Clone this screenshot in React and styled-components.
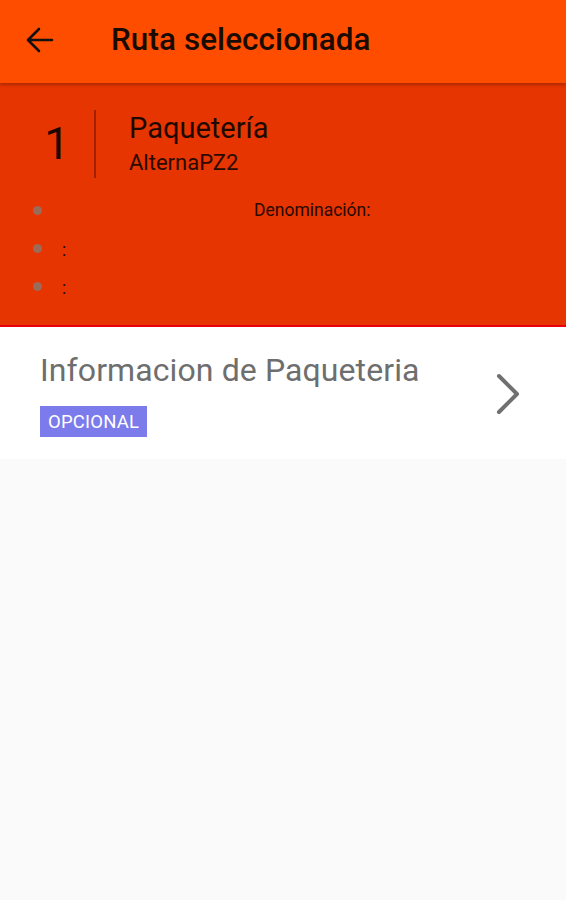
import React from "react";
import styled, { createGlobalStyle } from "styled-components";

const Global = createGlobalStyle`
  html, body { margin: 0; padding: 0; background: #fafafa; }
  body { font-family: Roboto, "Noto Sans", "Liberation Sans", sans-serif; }
`;

const Page = styled.div`
  width: 566px;
  min-height: 900px;
  background: #fafafa;
  display: flex;
  flex-direction: column;
`;

const Toolbar = styled.header`
  height: 83px;
  background: #ff4d00;
  display: flex;
  align-items: center;
  padding-left: 26px;
  box-shadow: 0 2px 3px rgba(0, 0, 0, 0.25);
  position: relative;
  z-index: 1;
  box-sizing: border-box;
`;

const BackButton = styled.div`
  width: 28px;
  height: 28px;
  display: flex;
  align-items: center;
  justify-content: center;
  margin-right: 57px;
  margin-top: -4px;
`;

const Title = styled.h1`
  margin: 0;
  font-size: 31.4px;
  font-weight: 500;
  color: #1a0a00;
  margin-top: -5px;
  letter-spacing: 0.1px;
`;

const RouteCard = styled.section`
  background: #e63500;
  border-bottom: 2px solid #e8000e;
  height: 244px;
  box-sizing: border-box;
  padding: 27px 0 0 0;
  display: flex;
  flex-direction: column;
`;

const RouteHead = styled.div`
  display: flex;
  align-items: stretch;
  height: 68px;
`;

const Number = styled.div`
  width: 96px;
  display: flex;
  justify-content: center;
  align-items: center;
  font-size: 45px;
  font-weight: 400;
  color: #1a0500;
  padding-left: 20px;
  box-sizing: border-box;
  border-right: 2px solid #a02000;
  line-height: 1;
  padding-bottom: 2px;
`;

const RouteInfo = styled.div`
  padding-left: 33px;
  display: flex;
  flex-direction: column;
`;

const RouteName = styled.div`
  font-size: 29px;
  color: #1f0800;
  line-height: 32px;
  margin-top: 2px;
`;

const RouteCode = styled.div`
  font-size: 22px;
  color: #2a0a00;
  line-height: 26px;
  margin-top: 6px;
`;

const Fields = styled.ul`
  list-style: none;
  margin: 22px 0 0 0;
  padding: 0 0 0 33px;
  display: flex;
  flex-direction: column;
  gap: 18px;
`;

const Field = styled.li`
  display: flex;
  align-items: center;
  height: 20px;
  font-size: 17.5px;
  color: #2a0800;
`;

const Dot = styled.span`
  width: 9px;
  height: 9px;
  border-radius: 50%;
  background: #9c6a58;
  flex: none;
`;

const FieldText = styled.span`
  margin-left: ${(p) => p.$offset}px;
  line-height: 20px;
  margin-top: ${(p) => (p.$top ? p.$top : 0)}px;
`;

const InfoRow = styled.div`
  background: #ffffff;
  height: 132px;
  display: flex;
  align-items: center;
  justify-content: space-between;
  padding: 0 42px 0 40px;
  box-sizing: border-box;
`;

const InfoText = styled.div`
  display: flex;
  flex-direction: column;
  align-items: flex-start;
  margin-top: 2px;
`;

const InfoTitle = styled.div`
  font-size: 32px;
  color: #6e6e6e;
  line-height: 38px;
  letter-spacing: 0.1px;
`;

const Chip = styled.span`
  margin-top: 17px;
  background: #7b7beb;
  color: #ffffff;
  font-size: 18.5px;
  line-height: 31px;
  height: 31px;
  padding: 1px 8px 0;
  box-sizing: border-box;
  letter-spacing: 0.2px;
`;

const Chevron = styled.div`
  width: 28px;
  height: 44px;
  display: flex;
  align-items: center;
  justify-content: center;
  margin-top: 2px;
  margin-right: 2px;
`;

export default function App() {
  return (
    <Page>
      <Global />
      <Toolbar>
        <BackButton>
          <svg width="28" height="26" viewBox="0 0 28 26" fill="none">
            <path
              d="M26 13H3M13 2L2 13l11 11"
              stroke="#111"
              strokeWidth="2.6"
              strokeLinecap="round"
              strokeLinejoin="round"
            />
          </svg>
        </BackButton>
        <Title>Ruta seleccionada</Title>
      </Toolbar>
      <RouteCard>
        <RouteHead>
          <Number>1</Number>
          <RouteInfo>
            <RouteName>Paquetería</RouteName>
            <RouteCode>AlternaPZ2</RouteCode>
          </RouteInfo>
        </RouteHead>
        <Fields>
          <Field>
            <Dot />
            <FieldText $offset={212} $top={0}>Denominación:</FieldText>
          </Field>
          <Field>
            <Dot />
            <FieldText $offset={20} $top={4}>:</FieldText>
          </Field>
          <Field>
            <Dot />
            <FieldText $offset={20} $top={4}>:</FieldText>
          </Field>
        </Fields>
      </RouteCard>
      <InfoRow>
        <InfoText>
          <InfoTitle>Informacion de Paqueteria</InfoTitle>
          <Chip>OPCIONAL</Chip>
        </InfoText>
        <Chevron>
          <svg width="26" height="42" viewBox="0 0 26 42" fill="none">
            <path
              d="M4 3l18 18L4 39"
              stroke="#707070"
              strokeWidth="4"
              strokeLinecap="round"
              strokeLinejoin="round"
            />
          </svg>
        </Chevron>
      </InfoRow>
    </Page>
  );
}
